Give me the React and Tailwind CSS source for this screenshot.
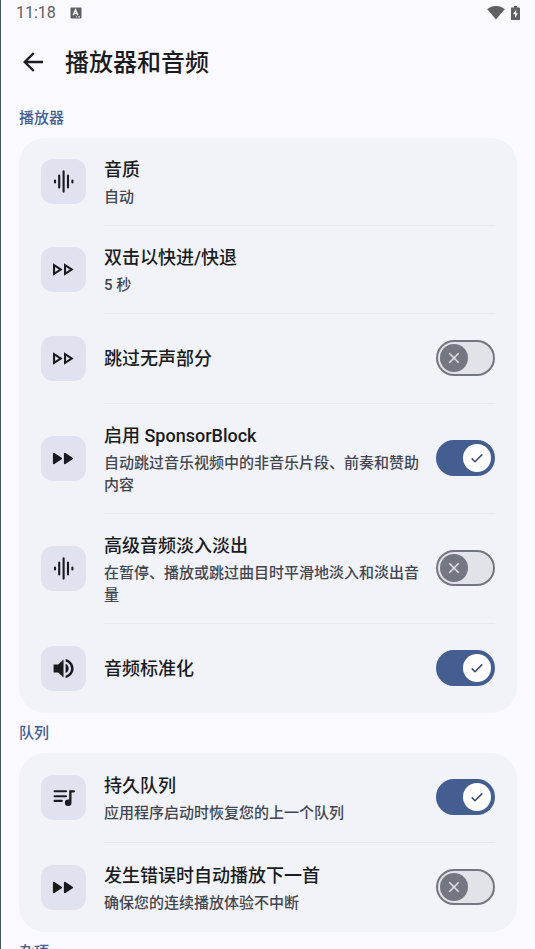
import { useState } from 'react';

// 图标统一使用 25x25 的画布
function Icon({ children }) {
    return (
        <svg viewBox="0 0 25 25" className="h-[25px] w-[25px]" fill="currentColor" aria-hidden="true">
            {children}
        </svg>
    );
}

function WaveIcon() {
    return (
        <Icon>
            <path
                d="M4 11.5v2M8.2 6.6v11.8M12.6 2.4v20.2M17 6.6v11.8M21.4 11.5v2"
                fill="none"
                stroke="currentColor"
                strokeWidth="2.1"
                strokeLinecap="round"
            />
        </Icon>
    );
}

function ForwardOutlineIcon() {
    return (
        <Icon>
            <path
                d="M2 6.2v12.6l9.7-6.3zM4.1 10l3.8 2.5L4.1 15zM13 6.2v12.6l9.7-6.3zM15.1 10l3.8 2.5-3.8 2.5z"
                fillRule="evenodd"
            />
        </Icon>
    );
}

function ForwardIcon() {
    return (
        <Icon>
            <path d="M2.9 7.8v9.4l7.2-4.7zM13.9 7.8v9.4l7.2-4.7z" stroke="currentColor" strokeWidth="2" strokeLinejoin="round" />
        </Icon>
    );
}

function VolumeIcon() {
    return (
        <Icon>
            <path d="M2.6 8.6v7.8h4.6l5.3 5V3.6l-5.3 5z" />
            <path d="M14.6 7.8v9.4c2-.9 3.1-2.7 3.1-4.700s-1.100-3.800-3.100-4.700z" />
            <path d="M14.600 2.900v2.500c3.200 1 5.400 3.700 5.400 7.100s-2.200 6.100-5.400 7.100v2.500c4.600-1 8-5 8-9.600s-3.400-8.600-8-9.600z" />
        </Icon>
    );
}

function QueueIcon() {
    return (
        <Icon>
            <path
                d="M3.6 6.3h11.4M3.6 11.2h11.4M3.6 15.9h7.2"
                fill="none"
                stroke="currentColor"
                strokeWidth="2.1"
                strokeLinecap="round"
            />
            <path d="M18.2 5.2h4.6c.7 0 1.2.5 1.2 1.1s-.5 1.1-1.2 1.1h-2.3v10.3a3.3 3.3 0 1 1-3.3-3.3c.3 0 .6 0 1 .1z" />
        </Icon>
    );
}

const sections = [
    {
        title: '播放器',
        items: [
            { id: 'quality', icon: WaveIcon, title: '音质', desc: '自动' },
            { id: 'seek', icon: ForwardOutlineIcon, title: '双击以快进/快退', desc: '5 秒' },
            { id: 'silence', icon: ForwardOutlineIcon, title: '跳过无声部分', toggle: true },
            {
                id: 'sponsor',
                icon: ForwardIcon,
                title: '启用 SponsorBlock',
                desc: '自动跳过音乐视频中的非音乐片段、前奏和赞助内容',
                toggle: true,
            },
            {
                id: 'crossfade',
                icon: WaveIcon,
                title: '高级音频淡入淡出',
                desc: '在暂停、播放或跳过曲目时平滑地淡入和淡出音量',
                toggle: true,
            },
            { id: 'normalize', icon: VolumeIcon, title: '音频标准化', toggle: true },
        ],
    },
    {
        title: '队列',
        items: [
            { id: 'persist', icon: QueueIcon, title: '持久队列', desc: '应用程序启动时恢复您的上一个队列', toggle: true },
            { id: 'autonext', icon: ForwardIcon, title: '发生错误时自动播放下一首', desc: '确保您的连续播放体验不中断', toggle: true },
        ],
    },
    { title: '杂项', items: [] },
];

function Switch({ id, checked, onChange }) {
    return (
        <span className="relative h-9 w-[59px] shrink-0">
            <input
                id={id}
                type="checkbox"
                role="switch"
                checked={checked}
                onChange={onChange}
                className="block h-9 w-[59px] cursor-pointer appearance-none rounded-full border-2 border-[#757780] bg-[#e2e3e9] checked:border-[#445e91] checked:bg-[#445e91]"
            />
            <span
                className={
                    checked
                        ? 'pointer-events-none absolute top-1 right-1 flex h-7 w-7 items-center justify-center rounded-full bg-white text-[#3b4a6b]'
                        : 'pointer-events-none absolute top-1 left-1 flex h-7 w-7 items-center justify-center rounded-full bg-[#757780] text-[#e2e3e9]'
                }
            >
                <svg viewBox="0 0 14 14" className="h-[14px] w-[14px]" fill="none" stroke="currentColor" strokeWidth="1.5">
                    {checked ? <path d="M1.7 7.4l3.3 3.3 7.3-7.3" /> : <path d="M2.3 2.3l9.4 9.4M11.7 2.3l-9.4 9.4" />}
                </svg>
            </span>
        </span>
    );
}

function SettingRow({ item, checked, onToggle }) {
    const ItemIcon = item.icon;
    const Row = item.toggle ? 'label' : 'button';

    return (
        <Row
            htmlFor={item.toggle ? item.id : undefined}
            className={
                item.toggle
                    ? 'flex min-h-[89px] w-full cursor-pointer items-center pt-[18px] pb-[17px] text-left'
                    : 'flex w-full cursor-pointer items-center pt-[18px] pb-[17px] text-left'
            }
        >
            <span className="mr-[18px] mb-0.5 flex h-[45px] w-[45px] shrink-0 items-center justify-center rounded-xl bg-[#e0e2ef] text-[#1a1b21]">
                <ItemIcon />
            </span>
            <span className="flex min-w-0 flex-1 flex-col gap-0.5">
                <span className="text-[18px] leading-7 font-medium text-[#1a1b20]">{item.title}</span>
                {item.desc && <span className="text-[15px] leading-[22px] font-medium text-[#44464f]">{item.desc}</span>}
            </span>
            {item.toggle && (
                <span className="mb-0.5 ml-2 flex">
                    <Switch id={item.id} checked={checked} onChange={onToggle} />
                </span>
            )}
        </Row>
    );
}

// 顶部状态栏
function StatusBar() {
    return (
        <div className="flex h-[26px] items-center px-[15px] text-[#5f6064]">
            <span className="font-[Roboto] text-[16px] leading-6">11:18</span>
            <svg viewBox="0 0 12 12" className="ml-[14px] h-3 w-3" aria-hidden="true">
                <rect x="0.5" y="0.5" width="11" height="11" rx="1" fill="currentColor" />
                <path d="M3.2 8.2L5.5 2.7l2.3 5.5M4 6.5h3" fill="none" stroke="#faf9ff" strokeWidth="1.4" />
                <path d="M6 9.9h1M8 9.9h2" stroke="#faf9ff" strokeWidth="1" />
            </svg>
            <svg viewBox="0 0 18 14" className="ml-auto h-[14px] w-[18px]" fill="currentColor" aria-hidden="true">
                <path d="M9 13.500L.3 3.200C2.700 1.200 5.700 0 9 0s6.300 1.200 8.700 3.200z" />
            </svg>
            <svg viewBox="0 0 9 14" className="ml-1.5 h-[14px] w-[9px]" aria-hidden="true">
                <path d="M3 0h3v1.400h2c.6 0 1 .4 1 1V13c0 .6-.4 1-1 1H1c-.6 0-1-.4-1-1V2.400c0-.6.4-1 1-1h2z" fill="currentColor" />
                <path d="M5.200 3.500L2 8.300h2.100v3.700L7 7.200H5.200z" fill="#faf9ff" />
            </svg>
        </div>
    );
}

export default function App() {
    const [enabled, setEnabled] = useState({
        silence: false,
        sponsor: true,
        crossfade: false,
        normalize: true,
        persist: true,
        autonext: false,
    });

    const toggle = (id) => setEnabled((prev) => ({ ...prev, [id]: !prev[id] }));

    return (
        <div className="h-screen overflow-hidden border-l border-[#41595a] bg-[#faf9ff] font-[Roboto,'Noto_Sans_CJK_SC',sans-serif]">
            <StatusBar />

            {/* 标题栏 */}
            <header className="flex h-[72px] items-center pl-5">
                <button aria-label="返回" className="flex h-6 w-6 items-center justify-center text-[#1a1b20]">
                    <svg viewBox="0 0 24 24" className="h-6 w-6" fill="none" stroke="currentColor" strokeWidth="2.4">
                        <path d="M22 12H4M12.8 3L3.800 12l9 9" />
                    </svg>
                </button>
                <h1 className="ml-5 pt-0.5 text-[24px] leading-8 font-medium text-[#1a1b20]">播放器和音频</h1>
            </header>

            <main className="px-[18px]">
                {sections.map((section) => (
                    <section key={section.title}>
                        <h2 className="flex h-10 items-center text-[15px] leading-[22px] font-medium text-[#445e91]">{section.title}</h2>
                        <div className="rounded-[26px] bg-[#f1f3f8] px-[22px]">
                            {section.items.map((item, i) => (
                                <div key={item.id}>
                                    {i > 0 && <div className="ml-[63px] h-px bg-[#e6e8ed]" />}
                                    <SettingRow item={item} checked={enabled[item.id]} onToggle={() => toggle(item.id)} />
                                </div>
                            ))}
                        </div>
                    </section>
                ))}
            </main>
        </div>
    );
}
